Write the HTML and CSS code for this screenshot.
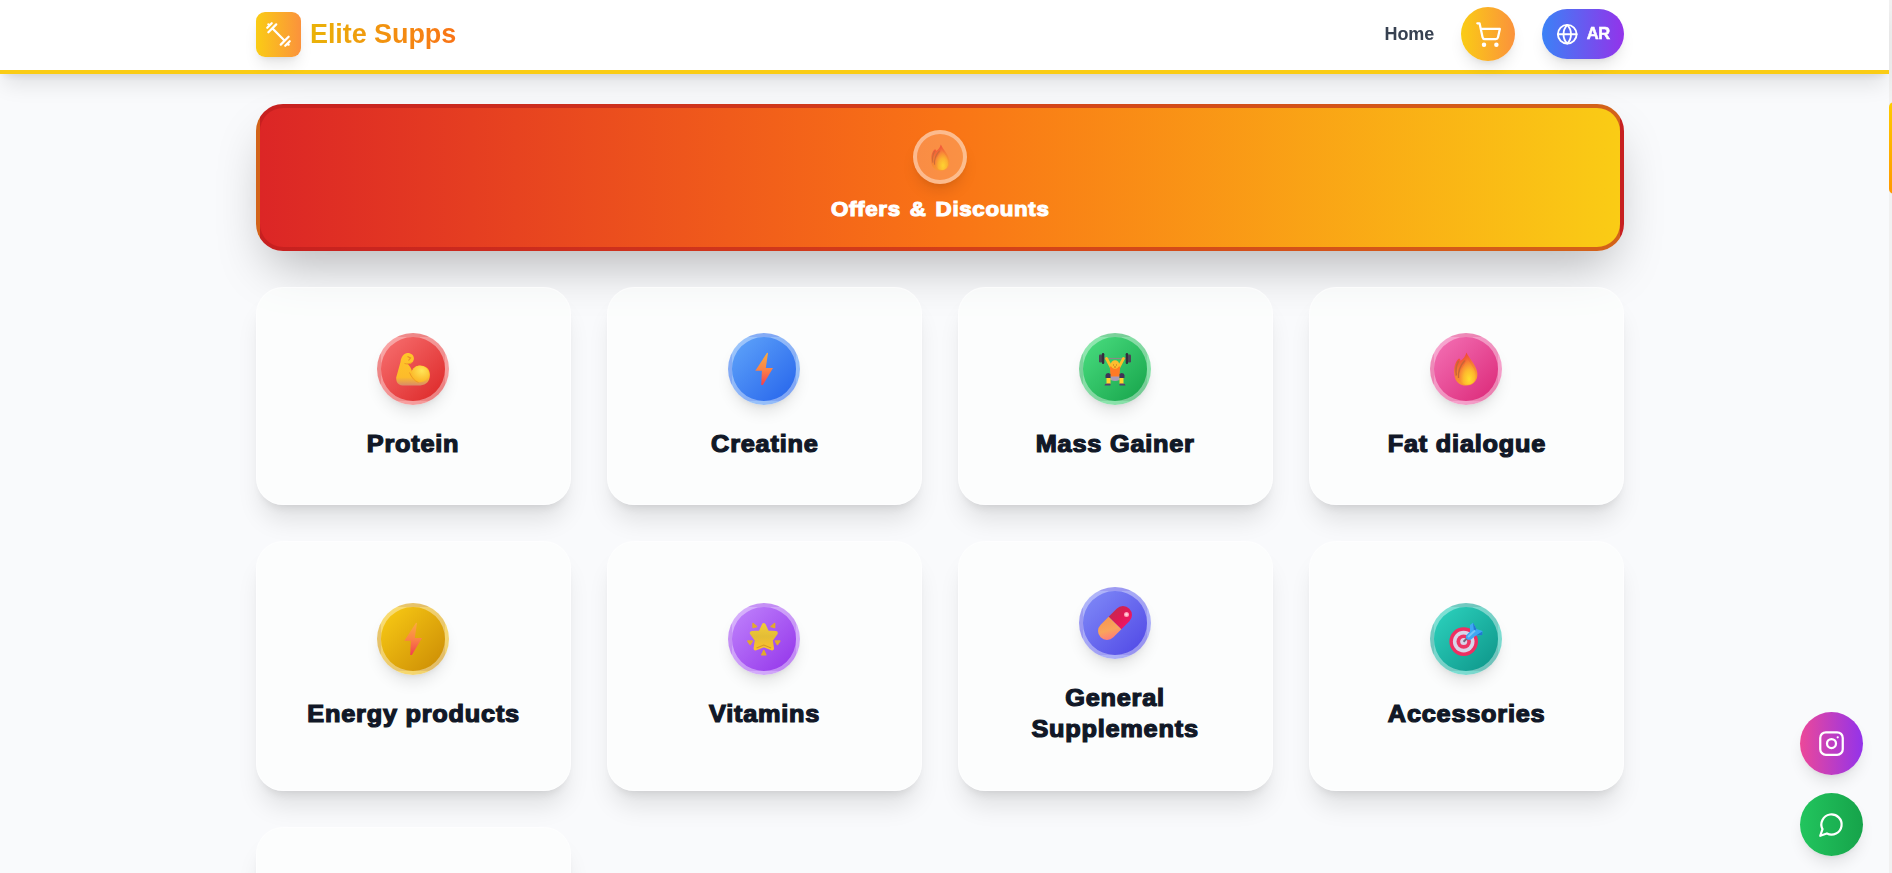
FILE: index.html
```html
<!DOCTYPE html>
<html lang="en">
<head>
<meta charset="utf-8">
<title>Elite Supps</title>
<link rel="stylesheet" href="styles.css">
</head>
<body>
<svg width="0" height="0" class="defs" aria-hidden="true">
  <defs>
    <linearGradient id="bolt" x1="0" y1="0" x2="0" y2="1"><stop offset="0" stop-color="#fbac3d"/><stop offset=".5" stop-color="#fb8446"/><stop offset="1" stop-color="#f2404f"/></linearGradient>
    <linearGradient id="flame" x1=".3" y1="0" x2=".7" y2="1"><stop offset="0" stop-color="#f03a3a"/><stop offset=".45" stop-color="#f57d33"/><stop offset="1" stop-color="#fba62e"/></linearGradient>
    <radialGradient id="core" cx=".6" cy=".8" r=".75"><stop offset="0" stop-color="#ffdf2e"/><stop offset=".45" stop-color="#fdb92d"/><stop offset="1" stop-color="#f4653a"/></radialGradient>
    <radialGradient id="muscle" cx=".6" cy=".3" r=".7"><stop offset="0" stop-color="#ffe558"/><stop offset="1" stop-color="#fbb525"/></radialGradient>
    <linearGradient id="arm" x1="0" y1="0" x2="0" y2="1"><stop offset="0" stop-color="#ffc629"/><stop offset=".75" stop-color="#fdbb2a"/><stop offset="1" stop-color="#d98c69"/></linearGradient>
    <linearGradient id="star" x1="0" y1="0" x2="0" y2="1"><stop offset="0" stop-color="#f0ca39"/><stop offset=".5" stop-color="#e3bd36"/><stop offset="1" stop-color="#fbc02d"/></linearGradient>
    <linearGradient id="capRed" x1="0" y1="0" x2="1" y2="0"><stop offset="0" stop-color="#c82750"/><stop offset=".5" stop-color="#df1954"/><stop offset="1" stop-color="#ee1764"/></linearGradient>
    <linearGradient id="capOrange" x1="0" y1="0" x2="1" y2=".6"><stop offset="0" stop-color="#f69650"/><stop offset=".6" stop-color="#f9a45c"/><stop offset="1" stop-color="#ff7f78"/></linearGradient>
    <symbol id="i-bolt" viewBox="0 0 34 34"><path d="M20 .8 8.300 18.800h6.600l-.7 14.300 1.700-.2L26 16h-7.200L21 1z" fill="url(#bolt)"/></symbol>
    <symbol id="i-fire" viewBox="0 0 34 34">
      <path d="M17.400.5C20 6.500 27.300 13 28.300 21c.7 7.500-4.300 12.600-11 12.600C10 33.600 5.300 29 5.100 20.500 5 14 6.800 9 10 6.500c1 .2 1.500 1 1.400 2.200C14.500 7 16.600 4 17.400.5z" fill="url(#flame)"/>
      <path d="M9.700 9C7.300 13 6.300 17.500 7.400 23.500M15.800 8.500C11.200 13.500 8.800 18 9.600 26" fill="none" stroke="#c76636" stroke-width="1.500"/>
      <path d="M18 5c2 6.500 8.600 10.500 8.800 18 .1 6-3 9.800-8.300 9.800-5.300 0-8.300-3.600-8.300-8.800C10.200 17.500 16.700 14 18 5z" fill="url(#core)"/>
    </symbol>
    <symbol id="i-arm" viewBox="0 0 34 34">
      <path d="M4.500 10C5.200 4.500 8 1.200 11.500 1c4-.1 7 2.900 6.300 6.400-.6 3.200-3.200 4.600-6.300 4.400 2.600 2.400 4.200 5.400 4.500 8C17.500 15.500 20 13.500 24 13.500c6 0 10.200 4 9.900 9.600-.2 6-3.600 10.300-9.500 10.300H6.500C2 33.400 0 30 .2 25.500z" fill="url(#arm)"/>
      <ellipse cx="24" cy="22" rx="9" ry="8.300" fill="url(#muscle)"/>
      <path d="M11.500 4.500l3 1.500-2 2.500" fill="none" stroke="#e98b27" stroke-width="1.200"/>
      <path d="M8.500 11.500c3 .8 5 .5 7-.8M13.500 20.500c2 5 5 8.500 9 10" fill="none" stroke="#ef9925" stroke-width="1"/>
    </symbol>
    <symbol id="i-lift" viewBox="0 0 34 34">
      <path d="M4 6.500h26" stroke="#8a8a86" stroke-width="1.200"/>
      <path d="M8.500 6.500 13 15M25.500 6.500 21 15" stroke="#fbbf2b" stroke-width="2.800" stroke-linecap="round"/>
      <path d="M11.800 14.500h10.400L21.500 25h-9z" fill="#ff7a24"/>
      <circle cx="17" cy="12.500" r="4.200" fill="#fdbd2e"/>
      <path d="M15 13h1M18 13h1M16 15h2" stroke="#a8611c" stroke-width=".8"/>
      <path d="M12.500 24.500h9v3.500q-4.500 2-9 0z" fill="#a99bb5"/>
      <path d="M7.500 23q.5-2 3-2l2 1v4h-5zM26.500 23q-.5-2-3-2l-2 1v4h5z" fill="#403356"/>
      <path d="M8.500 26h4v6h-4zM21.500 26h4v6h-4z" fill="#ffd52c"/>
      <path d="M6.500 33.500q0-2 2.500-2h3.500v2zM27.500 33.500q0-2-2.500-2h-3.500v2z" fill="#55436e"/>
      <rect x="1" y="2.500" width="3" height="8" rx="1.300" fill="#4b4553"/><rect x="3.800" y="1" width="2.500" height="11" rx="1.200" fill="#332c3c"/>
      <rect x="27.700" y="1" width="2.500" height="11" rx="1.200" fill="#332c3c"/><rect x="30" y="2.500" width="3" height="8" rx="1.300" fill="#4b4553"/>
    </symbol>
    <symbol id="i-star" viewBox="0 0 34 34">
      <path d="M16.800 3l3.400 7.500 8.600.6-5 7 1.200 8.300-8.200-3.200-8.200 3.200 1.200-8.300-5-7 8.600-.6z" fill="url(#star)" stroke="url(#star)" stroke-width="4" stroke-linejoin="round"/>
      <path d="M9.500 26l7.300-3 7.300 3" fill="none" stroke="#d59a25" stroke-width="1.100"/>
      <g fill="#e2a92d" stroke="#e2a92d" stroke-width="1.500" stroke-linejoin="round"><path d="M6 1.500v4l3.500-1zM27.600 1.500l-3.500 3 3.500 1zM.8 19h4.500l-2 3.500zM32.800 19h-4.500l2 3.500zM16.800 28.500l-2 4.300h4z"/></g>
    </symbol>
    <symbol id="i-pill" viewBox="0 0 34 34">
      <g transform="rotate(45 17 17)"><path d="M8 17V5.700a9 9 0 0 1 18 0V17z" fill="url(#capRed)"/><path d="M8 17v11.300a9 9 0 0 0 18 0V17z" fill="url(#capOrange)"/></g>
      <circle cx="28.500" cy="8.500" r="2.500" fill="#ff9eb5"/><circle cx="28.500" cy="8.500" r="1.300" fill="#ffd7df"/>
    </symbol>
    <symbol id="i-target" viewBox="0 0 34 34">
      <circle cx="14.700" cy="19.600" r="14.300" fill="#ee2f62"/><circle cx="14.700" cy="19.600" r="10.800" fill="#d9d5e9"/><circle cx="14.700" cy="19.600" r="7.200" fill="#ed3565"/><circle cx="14.700" cy="19.600" r="3.500" fill="#d9d5e9"/>
      <path d="M14.500 19.800 19 15.500" stroke="#72677f" stroke-width="2"/>
      <path d="M17.500 13 21 9.500V3L24 .8 27.500 7l6 2-.5 4-6.500.8-4 3.400c-3.500 2-7-.8-5-4.200z" fill="#3fa8f4"/>
      <path d="M24 .8 27.500 7 25 9.500zM33.300 9.500v3.500l-6.300.5z" fill="#2378d2"/><path d="M19 15 26 8.500" stroke="#76c6f9" stroke-width="2"/>
    </symbol>
  </defs>
</svg>

<header class="header">
  <div class="bar">
    <a class="brand">
      <span class="brand-mark"><svg class="icon brand-icon" viewBox="0 0 24 24"><path d="m6.500 6.500 11 11M21 21l-1-1M3 3l1 1M18 22l4-4M2 6l4-4M3 10l7-7M14 21l7-7"/></svg></span>
      <span class="brand-name">Elite Supps</span>
    </a>
    <nav class="nav">
      <a class="nav-link">Home</a>
      <button class="cart" aria-label="Cart"><svg class="icon cart-icon" viewBox="0 0 24 24"><circle cx="8" cy="21" r="1"/><circle cx="19" cy="21" r="1"/><path d="M2.050 2.050h2l2.660 12.420a2 2 0 0 0 2 1.580h9.780a2 2 0 0 0 1.950-1.570l1.650-7.430H5.120"/></svg></button>
      <button class="lang"><svg class="icon lang-icon" viewBox="0 0 24 24"><circle cx="12" cy="12" r="10"/><path d="M12 2a14.500 14.500 0 0 0 0 20 14.500 14.500 0 0 0 0-20M2 12h20"/></svg><span class="lang-label">AR</span></button>
    </nav>
  </div>
</header>

<main class="main">
  <a class="offers">
    <span class="offers-badge"><svg class="emoji-sm"><use href="#i-fire"/></svg></span>
    <span class="offers-title">Offers &amp; Discounts</span>
  </a>
  <div class="grid">
    <a class="card"><span class="badge red"><svg class="emoji"><use href="#i-arm"/></svg></span><span class="title">Protein</span></a>
    <a class="card"><span class="badge blue"><svg class="emoji"><use href="#i-bolt"/></svg></span><span class="title">Creatine</span></a>
    <a class="card"><span class="badge green"><svg class="emoji"><use href="#i-lift"/></svg></span><span class="title">Mass Gainer</span></a>
    <a class="card"><span class="badge pink"><svg class="emoji"><use href="#i-fire"/></svg></span><span class="title">Fat dialogue</span></a>
    <a class="card"><span class="badge yellow"><svg class="emoji"><use href="#i-bolt"/></svg></span><span class="title">Energy products</span></a>
    <a class="card"><span class="badge purple"><svg class="emoji"><use href="#i-star"/></svg></span><span class="title">Vitamins</span></a>
    <a class="card"><span class="badge indigo"><svg class="emoji"><use href="#i-pill"/></svg></span><span class="title">General<br>Supplements</span></a>
    <a class="card"><span class="badge teal"><svg class="emoji"><use href="#i-target"/></svg></span><span class="title">Accessories</span></a>
    <a class="card"></a>
  </div>
</main>

<div class="social">
  <a class="social-btn instagram" aria-label="Instagram"><svg class="icon brand-icon" viewBox="0 0 24 24"><rect x="2" y="2" width="20" height="20" rx="5"/><circle cx="12" cy="12" r="4"/><path d="M17.500 6.500h.01"/></svg></a>
  <a class="social-btn chat" aria-label="Chat"><svg class="icon brand-icon" viewBox="0 0 24 24"><path d="M7.900 20A9 9 0 1 0 4 16.100L2 22Z"/></svg></a>
</div>
<div class="scroll-track"><div class="scroll-thumb"></div></div>
</body>
</html>
```
FILE: styles.css
```css
* { box-sizing: border-box; }
html { font-size: 18px; }
body {
  margin: 0;
  height: 873px;
  overflow: hidden;
  background: #f9fafc;
  color: #111827;
  font-family: "Liberation Sans", Arial, sans-serif;
}
.defs { position: absolute; }
button { border: 0; padding: 0; font: inherit; color: inherit; }

.icon {
  fill: none;
  stroke: #fff;
  stroke-width: 2;
  stroke-linecap: round;
  stroke-linejoin: round;
}
.brand-icon { width: 27px; height: 27px; }
.cart-icon { width: 27px; height: 27px; }
.lang-icon { width: 22.5px; height: 22.5px; }

.header {
  position: relative;
  z-index: 2;
  height: 74px;
  margin-right: 3px;
  padding: 0 265px 0 256px;
  background: #fff;
  border-bottom: 4px solid #facc15;
  box-shadow: 0 14px 20px -4px rgba(0,0,0,.1), 0 6px 8px -4px rgba(0,0,0,.08);
}
.bar { height: 68px; display: flex; align-items: center; justify-content: space-between; }
.brand { display: flex; align-items: center; gap: 9px; }
.brand-mark {
  width: 45px;
  height: 45px;
  display: grid;
  place-items: center;
  border-radius: 9px;
  background: linear-gradient(to right, #facc15, #fb923c);
  box-shadow: 0 10px 15px -3px rgba(0,0,0,.1), 0 4px 6px -4px rgba(0,0,0,.1);
}
.brand-name {
  font-size: 27px;
  line-height: 36px;
  font-weight: 700;
  letter-spacing: -.08px;
  color: transparent;
  background: linear-gradient(to right, #eab308, #f97316);
  background-clip: text;
  -webkit-background-clip: text;
}
.nav { display: flex; align-items: center; gap: 27px; }
.nav-link { font-size: 18px; letter-spacing: -.15px; font-weight: 700; color: #374151; }
.cart, .lang { box-shadow: 0 10px 15px -3px rgba(0,0,0,.1), 0 4px 6px -4px rgba(0,0,0,.1); }
.cart {
  width: 54px;
  height: 54px;
  display: grid;
  place-items: center;
  border-radius: 50%;
  background: linear-gradient(to right, #facc15, #fb923c);
}
.lang {
  width: 82px;
  height: 50px;
  display: flex;
  align-items: center;
  justify-content: center;
  gap: 8px;
  border-radius: 25px;
  color: #fff;
  font-weight: 700;
  font-size: 16.5px;
  background: linear-gradient(to right, #3b82f6, #9333ea);
}
.lang-label { margin-top: -1px; letter-spacing: -.4px; -webkit-text-stroke: .5px currentColor; }

.main { height: 799px; overflow: hidden; padding: 30px 268px 0 256px; }
.offers {
  height: 147px;
  display: flex;
  flex-direction: column;
  align-items: center;
  padding-top: 22px;
  gap: 11px;
  border: 4px solid rgba(185,28,28,.6);
  border-radius: 27px;
  background: linear-gradient(to right, #dc2626, #f97316, #facc15);
  box-shadow: 0 25px 50px -12px rgba(0,0,0,.28);
}
.offers-badge {
  width: 54px;
  height: 54px;
  display: grid;
  place-items: center;
  border: 4px solid rgba(255,255,255,.4);
  border-radius: 50%;
  background: rgba(255,255,255,.2);
  box-shadow: 0 10px 15px -3px rgba(0,0,0,.1), 0 4px 6px -4px rgba(0,0,0,.1);
}
.emoji-sm { width: 27px; height: 27px; opacity: .85; }
.offers-title {
  color: #fff;
  font-size: 20.5px;
  line-height: 28px;
  font-weight: 700;
  letter-spacing: .6px;
  word-spacing: 2px;
  white-space: nowrap;
  -webkit-text-stroke: 1.1px currentColor;
  transform: scaleX(1.09);
}

.grid {
  display: grid;
  grid-template-columns: repeat(4, 1fr);
  grid-template-rows: 218px 250px 250px;
  gap: 36px;
  margin-top: 36px;
}
.card {
  display: flex;
  flex-direction: column;
  align-items: center;
  justify-content: center;
  gap: 22.5px;
  border: 1px solid rgba(255,255,255,.5);
  border-radius: 27px;
  background: rgba(253,255,253,.6);
  box-shadow: 0 20px 25px -5px rgba(0,0,0,.1), 0 8px 10px -6px rgba(0,0,0,.1);
}
.badge {
  width: 72px;
  height: 72px;
  margin-right: 1px;
  display: grid;
  place-items: center;
  border: 4px solid rgba(255,255,255,.4);
  border-radius: 50%;
  box-shadow: 0 10px 15px -3px rgba(0,0,0,.1), 0 4px 6px -4px rgba(0,0,0,.1);
}
.emoji { width: 34px; height: 34px; }
.title {
  font-size: 23px;
  line-height: 31.5px;
  font-weight: 700;
  letter-spacing: .7px;
  text-align: center;
  -webkit-text-stroke: 1.2px currentColor;
  transform: translateY(.5px) scaleX(1.1);
}
.red { background-image: linear-gradient(to bottom right, #f87171, #dc2626); }
.blue { background-image: linear-gradient(to bottom right, #60a5fa, #2563eb); }
.green { background-image: linear-gradient(to bottom right, #4ade80, #16a34a); }
.pink { background-image: linear-gradient(to bottom right, #f472b6, #db2777); }
.yellow { background-image: linear-gradient(to bottom right, #facc15, #ca8a04); }
.purple { background-image: linear-gradient(to bottom right, #c084fc, #9333ea); }
.indigo { background-image: linear-gradient(to bottom right, #818cf8, #4f46e5); }
.teal { background-image: linear-gradient(to bottom right, #2dd4bf, #0d9488); }

.social {
  position: fixed;
  right: 29px;
  bottom: 17px;
  display: flex;
  flex-direction: column;
  gap: 18px;
}
.social-btn {
  width: 63px;
  height: 63px;
  display: grid;
  place-items: center;
  border-radius: 50%;
  box-shadow: 0 10px 15px -3px rgba(0,0,0,.1), 0 4px 6px -4px rgba(0,0,0,.1);
}
.instagram { background: linear-gradient(to right, #ec4899, #9333ea); }
.chat { background: linear-gradient(to right, #22c55e, #16a34a); }

.scroll-track {
  position: fixed;
  top: 0;
  right: 0;
  bottom: 0;
  width: 3px;
  padding-top: 102px;
  overflow: hidden;
  background: #f1f1f1;
}
.scroll-thumb { width: 12px; height: 92px; border-radius: 5px; background: linear-gradient(#ffcc00, #ff9800); }
```
